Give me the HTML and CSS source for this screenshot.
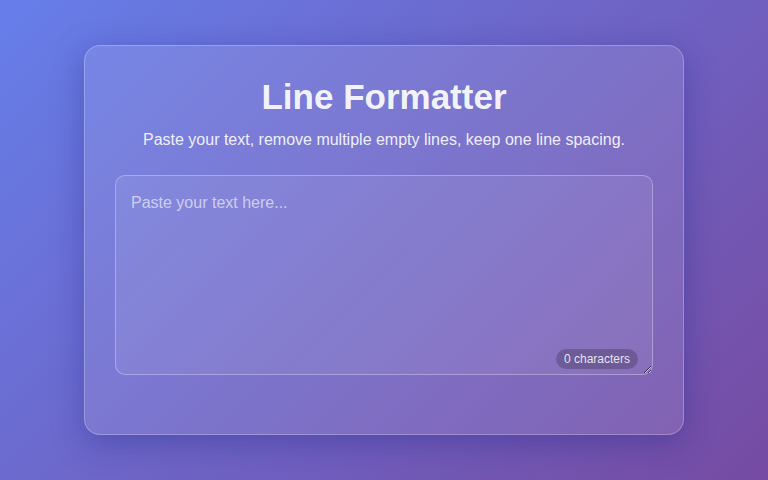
FILE: index.html
```html
<!DOCTYPE html>
<html lang="en">
<head>
<meta charset="utf-8">
<title>Line Formatter</title>
<link rel="stylesheet" href="styles.css">
</head>
<body>
<main class="card">
  <h1 class="title">Line Formatter</h1>
  <p class="subtitle">Paste your text, remove multiple empty lines, keep one line spacing.</p>
  <div class="editor">
    <textarea class="input" placeholder="Paste your text here..."></textarea>
    <span class="count">0 characters</span>
  </div>
</main>
</body>
</html>
```
FILE: styles.css
```css
* { box-sizing: border-box; }
html, body { margin: 0; padding: 0; }
body {
  min-height: 100vh;
  height: 480px;
  display: flex;
  align-items: center;
  justify-content: center;
  background: linear-gradient(135deg, #667eea 0%, #764ba2 100%);
  font-family: "Liberation Sans", Arial, sans-serif;
  color: #fff;
}
.card {
  width: 600px;
  height: 390px;
  padding: 30px;
  border-radius: 16px;
  background: rgba(255, 255, 255, 0.1);
  border: 1px solid rgba(255, 255, 255, 0.25);
  box-shadow: 0 8px 32px rgba(31, 38, 135, 0.37);
  display: flex;
  flex-direction: column;
}
.title {
  margin: 0 0 12px;
  text-align: center;
  font-size: 35px;
  line-height: 42px;
  font-weight: 700;
  color: rgba(255, 255, 255, 0.93);
}
.subtitle {
  margin: 0 0 25px;
  text-align: center;
  font-size: 16px;
  line-height: 20px;
  color: rgba(255, 255, 255, 0.9);
}
.editor {
  position: relative;
}
.input {
  display: block;
  width: 100%;
  height: 200px;
  padding: 16px 15px;
  border-radius: 10px;
  border: 1px solid rgba(255, 255, 255, 0.3);
  background: rgba(255, 255, 255, 0.07);
  color: #fff;
  font-family: "Liberation Sans", Arial, sans-serif;
  font-size: 16px;
  line-height: 22px;
  outline: none;
  resize: both;
}
.input::placeholder {
  color: rgba(255, 255, 255, 0.6);
}
.count {
  position: absolute;
  right: 15px;
  bottom: 6px;
  padding: 3px 8px;
  border-radius: 10px;
  background: rgba(0, 0, 0, 0.2);
  font-size: 12px;
  line-height: 14px;
  color: rgba(255, 255, 255, 0.85);
}
```
